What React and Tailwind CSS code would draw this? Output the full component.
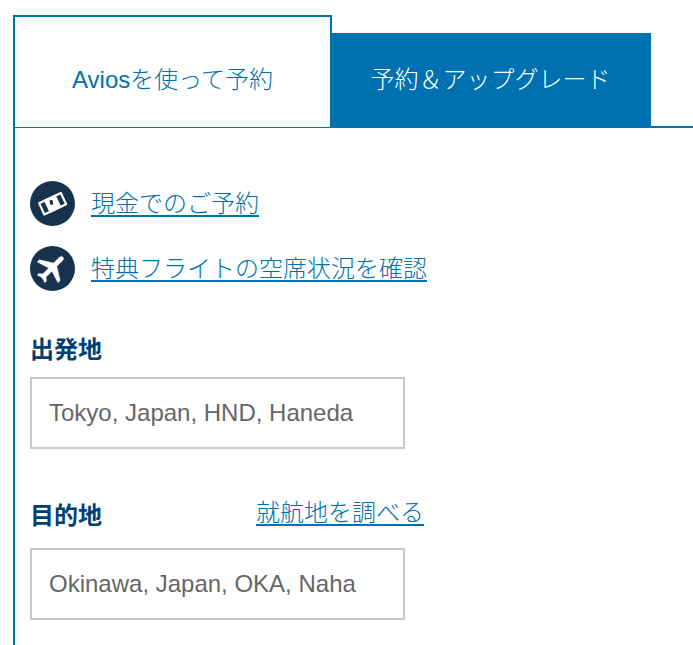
export default function App() {
  return (
    <div className="h-[645px] w-[693px] overflow-hidden bg-white pl-[13px] pt-[15px] font-['Liberation_Sans','Noto_Sans_CJK_JP',sans-serif]">
      <div className="flex h-[113px] items-end border-b-2 border-[#0071b0]">
        <div className="z-10 -mb-[1px] flex h-[112px] w-[319px] items-center justify-center border-2 border-b-0 border-[#0071b0] bg-white pt-[17px] text-[24px] font-light text-[#0071b0]">
          <span className="relative top-[-1px]">Aviosを使って予約</span>
        </div>
        <div className="relative z-20 -mb-[1px] -ml-[2px] flex h-[94px] w-[321px] items-center justify-center bg-[#0071b0] text-[24px] font-light text-white">
          予約＆アップグレード
        </div>
      </div>
      <div className="h-[517px] border-l-2 border-[#0071b0] pl-[15px] pt-[53px]">
        <div className="flex h-[45px] items-center gap-[16px]">
          <span className="flex h-[45px] w-[45px] shrink-0 items-center justify-center rounded-full bg-[#17324f]">
            <svg viewBox="0 0 45 45" className="h-[45px] w-[45px]" fill="none">
              <g transform="rotate(-25 22.5 22.5)">
                <path d="M10.5 16.5h24v12.5h-24z" stroke="#fff" strokeWidth="2.2" strokeLinejoin="round" />
                <path d="M16 15.5h13v14.5H16z" fill="#fff" />
                <path d="M21 18.5l3 0.5-1 4.5-3-0.5z" fill="#17324f" />
              </g>
            </svg>
          </span>
          <a className="text-[24px] font-light leading-[30px] text-[#0071b0] underline decoration-2 underline-offset-[3px]">現金でのご予約</a>
        </div>
        <div className="mt-[20px] flex h-[45px] items-center gap-[16px]">
          <span className="flex h-[45px] w-[45px] shrink-0 items-center justify-center rounded-full bg-[#17324f]">
            <svg viewBox="0 0 24 24" className="h-[37px] w-[37px]" fill="#fff" stroke="#fff" strokeWidth="0.25">
              <path
                transform="rotate(45 12 12)"
                d="M21 16v-2l-8-5V3.5c0-.83-.67-1.5-1.5-1.5S10 2.67 10 3.5V9l-8 5v2l8-2.5V19l-2 1.5V22l3.5-1 3.5 1v-1.5L13 19v-5.5l8 2.5z"
              />
            </svg>
          </span>
          <a className="text-[24px] font-light leading-[30px] text-[#0071b0] underline decoration-2 underline-offset-[3px]">特典フライトの空席状況を確認</a>
        </div>
        <div className="mt-[44px] text-[24px] font-bold leading-[30px] text-[#003f72]">出発地</div>
        <div className="mt-[12px] flex h-[72px] w-[375px] items-center border-2 border-[#c8c8c8] px-[17px] text-[24px] text-[#666666]">
          Tokyo, Japan, HND, Haneda
        </div>
        <div className="mt-[52px] flex w-[394px] items-end justify-between">
          <div className="text-[24px] font-bold leading-[30px] text-[#003f72]">目的地</div>
          <a className="relative top-[-3px] text-[24px] font-light leading-[30px] text-[#0071b0] underline decoration-2 underline-offset-[3px]">就航地を調べる</a>
        </div>
        <div className="mt-[17px] flex h-[72px] w-[375px] items-center border-2 border-[#c8c8c8] px-[17px] text-[24px] text-[#666666]">
          Okinawa, Japan, OKA, Naha
        </div>
      </div>
    </div>
  );
}
